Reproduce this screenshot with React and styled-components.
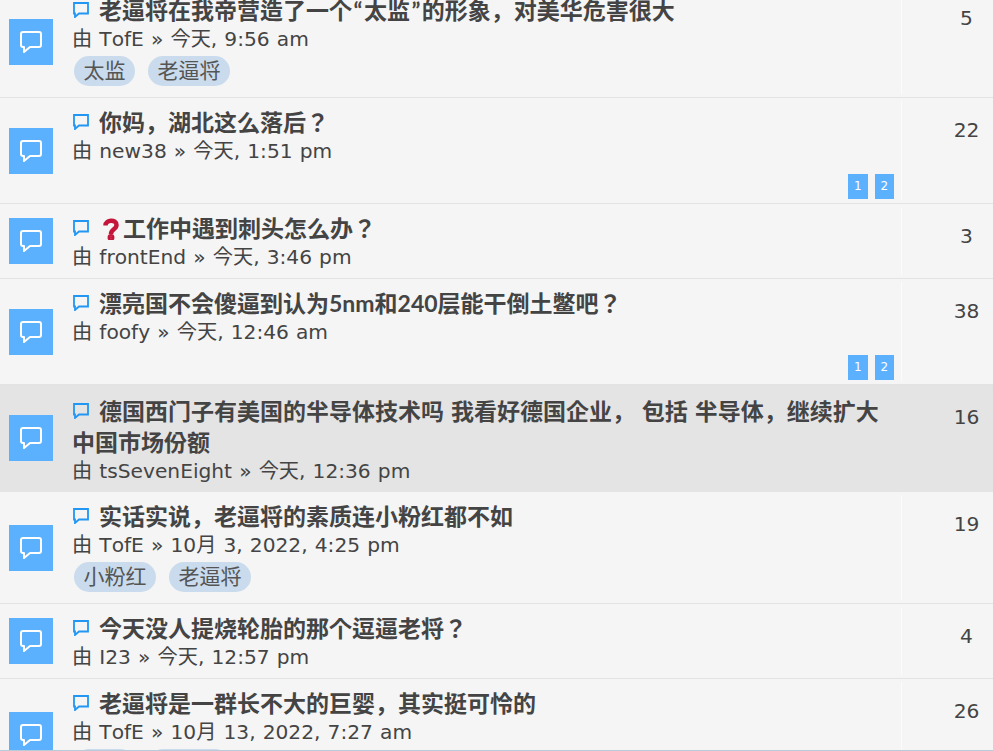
import React from 'react';
import styled, { createGlobalStyle } from 'styled-components';

const GlobalStyle = createGlobalStyle`
  html, body {
    margin: 0;
    padding: 0;
    height: 100%;
    overflow: hidden;
    background: #f5f5f5;
  }
`;

const Quote = styled.span`
  padding: 0 1.5px;
`;

const topics = [
  { id: 1, title: <>老逼将在我帝营造了一个<Quote>“</Quote>太监<Quote>”</Quote>的形象，对美华危害很大</>, author: 'TofE', date: '今天, 9:56 am', count: 5, tags: ['太监', '老逼将'] },
  { id: 2, title: '你妈，湖北这么落后？', author: 'new38', date: '今天, 1:51 pm', count: 22, pages: [1, 2] },
  { id: 3, title: '工作中遇到刺头怎么办？', author: 'frontEnd', date: '今天, 3:46 pm', count: 3, question: true },
  { id: 4, title: '漂亮国不会傻逼到认为5nm和240层能干倒土鳖吧？', author: 'foofy', date: '今天, 12:46 am', count: 38, pages: [1, 2] },
  { id: 5, title: '德国西门子有美国的半导体技术吗 我看好德国企业， 包括 半导体，继续扩大中国市场份额', author: 'tsSevenEight', date: '今天, 12:36 pm', count: 16, active: true },
  { id: 6, title: '实话实说，老逼将的素质连小粉红都不如', author: 'TofE', date: '10月 3, 2022, 4:25 pm', count: 19, tags: ['小粉红', '老逼将'] },
  { id: 7, title: '今天没人提烧轮胎的那个逗逼老将？', author: 'I23', date: '今天, 12:57 pm', count: 4 },
  { id: 8, title: '老逼将是一群长不大的巨婴，其实挺可怜的', author: 'TofE', date: '10月 13, 2022, 7:27 am', count: 26, tags: ['巨婴', '老逼将'] },
];

const Page = styled.div`
  box-sizing: border-box;
  height: 751px;
  overflow: hidden;
  background: #f5f5f5;
  border-bottom: 1px solid #b9cbd9;
  color: #444;
  font-family: "DejaVu Sans", "Noto Sans CJK KR", sans-serif;
  font-size: 20.2px;
  font-kerning: none;
  text-spacing-trim: space-all;
`;

const List = styled.ul`
  list-style: none;
  margin: -14px 0 0;
  padding: 0;
`;

const Row = styled.li`
  display: flex;
  box-sizing: border-box;
  min-height: 75px;
  background: ${({ $active }) => ($active ? '#e4e4e4' : '#f5f5f5')};
  border-bottom: 1px solid ${({ $active }) => ($active ? '#e4e4e4' : '#e3e3e3')};
`;

const IconBox = styled.div`
  flex: none;
  align-self: center;
  width: 44px;
  height: 46px;
  margin-left: 9px;
  background: #5cb1ff;
  display: flex;
  align-items: center;
  justify-content: center;
`;

const Body = styled.div`
  flex: 1;
  min-width: 0;
  box-sizing: border-box;
  padding: ${({ $active }) => ($active ? '11px 7px 7px 19px' : '9px 7px 4px 19px')};
`;

const Title = styled.div`
  font-family: "Lato", "Noto Sans CJK KR", sans-serif;
  font-weight: 700;
  font-size: 23px;
  line-height: 31px;
  word-spacing: 1.3px;
  color: #444;
`;

const SmallBubble = styled.svg`
  width: 16px;
  height: 16px;
  margin: 0 10px 0 1px;
  vertical-align: 1px;
`;

const Question = styled.svg`
  width: 24px;
  height: 22px;
  vertical-align: -3px;
`;

const Meta = styled.div`
  line-height: 26px;
  color: #444;
  word-spacing: 0.7px;
`;

const Tags = styled.div`
  display: flex;
  gap: 13px;
  padding: 4px 0 7px 2px;
`;

const Tag = styled.span`
  background: #c9dbec;
  border-radius: 15px;
  height: 30px;
  line-height: 30px;
  padding: 0 9.5px;
  font-size: 21px;
  color: #555;
`;

const Pages = styled.div`
  display: flex;
  justify-content: flex-end;
  gap: 7px;
  padding-top: 10px;
`;

const PageLink = styled.span`
  width: 19.5px;
  height: 25px;
  background: #5cb1ff;
  color: #fff;
  font-size: 12px;
  line-height: 25px;
  text-align: center;
`;

const Count = styled.div`
  flex: none;
  box-sizing: border-box;
  width: 92px;
  margin: 3px 0;
  padding: 15px 0 0 38px;
  border-left: 1px solid ${({ $active }) => ($active ? 'transparent' : '#fbfbfb')};
  text-align: center;
  line-height: 28px;
`;

function BubbleIcon() {
  return (
    <svg width="22" height="22" viewBox="0 0 22 22" fill="none" stroke="#fff" strokeWidth="2" strokeLinejoin="round">
      <path d="M3 1h16a2 2 0 0 1 2 2v11a2 2 0 0 1-2 2h-9l-6 5v-5H3a2 2 0 0 1-2-2V3a2 2 0 0 1 2-2z" />
    </svg>
  );
}

function TopicRow({ topic }) {
  return (
    <Row $active={topic.active}>
      <IconBox>
        <BubbleIcon />
      </IconBox>
      <Body $active={topic.active}>
        <Title>
          <SmallBubble viewBox="0 0 16 16" fill="none" stroke="#2196f3" strokeWidth="1.8">
            <path d="M1 1h14v10.500H6L2 15v-3.500H1z" />
          </SmallBubble>
          {topic.question && (
            <Question viewBox="0 0 24 22" fill="none" stroke="#c4153a" strokeWidth="4.500">
              <path d="M6.500 7.500C6.500 1.500 17.500 1 17.500 7c0 4.500-5.500 4-5.500 9" />
              <circle cx="12" cy="19.500" r="1.200" fill="#c4153a" />
            </Question>
          )}
          {topic.title}
        </Title>
        <Meta>由 {topic.author} » {topic.date}</Meta>
        {topic.tags && (
          <Tags>
            {topic.tags.map((tag) => (
              <Tag key={tag}>{tag}</Tag>
            ))}
          </Tags>
        )}
        {topic.pages && (
          <Pages>
            {topic.pages.map((p) => (
              <PageLink key={p}>{p}</PageLink>
            ))}
          </Pages>
        )}
      </Body>
      <Count $active={topic.active}>{topic.count}</Count>
    </Row>
  );
}

export default function App() {
  return (
    <Page>
      <GlobalStyle />
      <List>
        {topics.map((topic) => (
          <TopicRow key={topic.id} topic={topic} />
        ))}
      </List>
    </Page>
  );
}
